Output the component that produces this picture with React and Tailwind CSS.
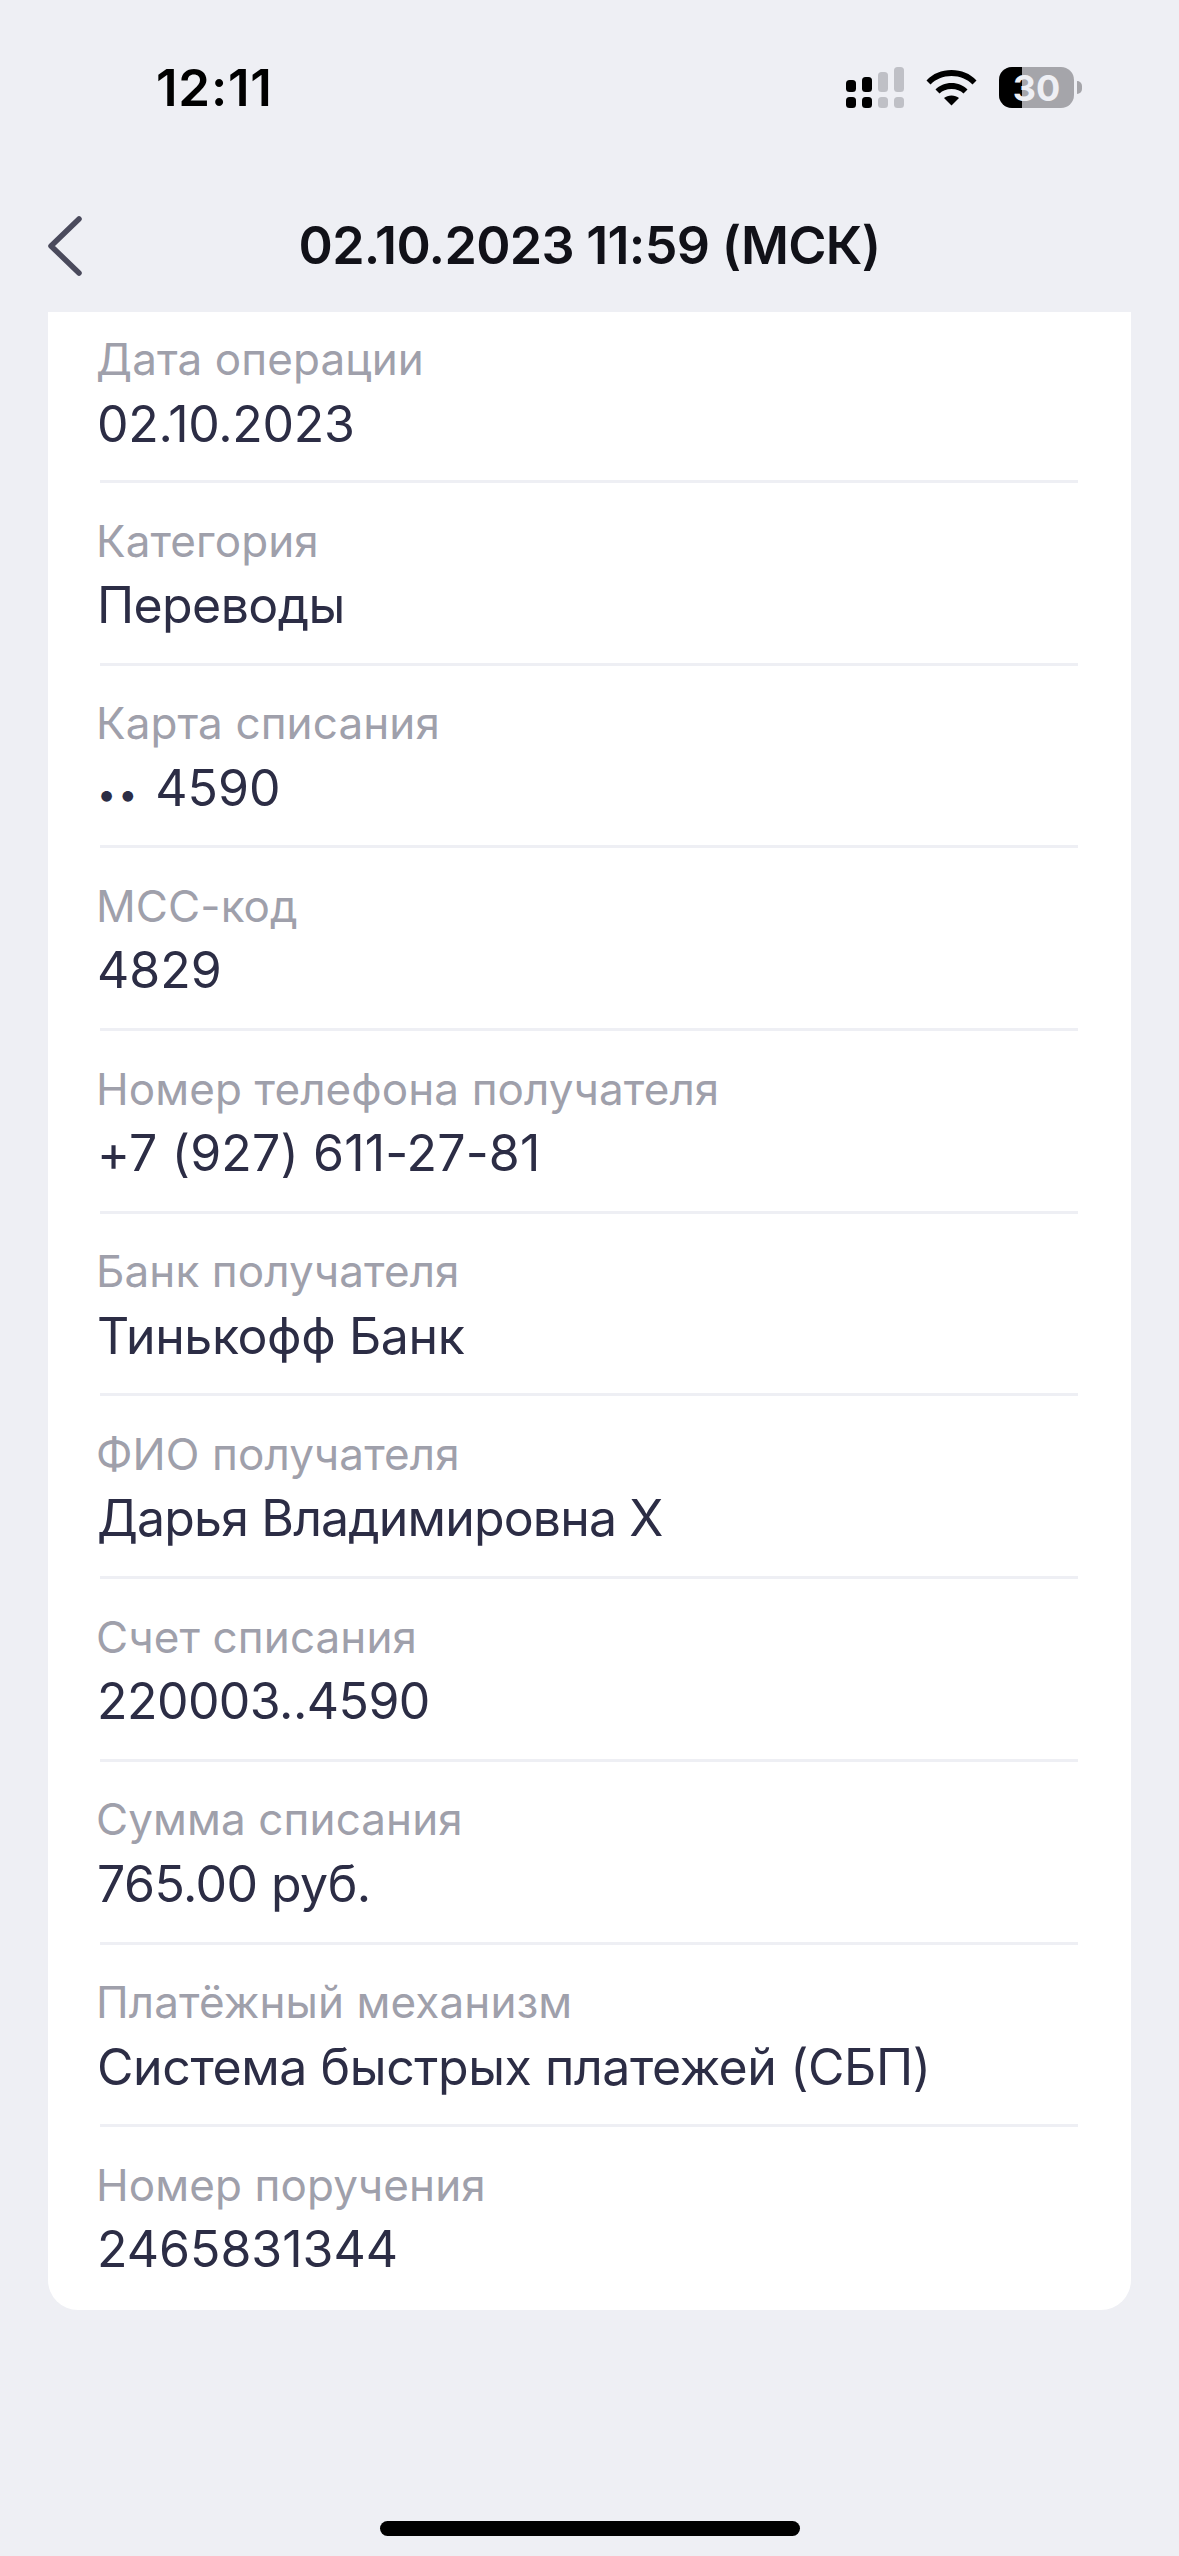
const rows = [
  ["Дата операции", "02.10.2023", "tracking-[-0.3px]"],
  ["Категория", "Переводы", "tracking-[-0.6px]"],
  ["Карта списания", "4590", "tracking-[0px]"],
  ["MCC-код", "4829", "tracking-[0px]"],
  ["Номер телефона получателя", "+7 (927) 611-27-81", "tracking-[0.15px]"],
  ["Банк получателя", "Тинькофф Банк", "tracking-[-0.4px]"],
  ["ФИО получателя", "Дарья Владимировна Х", "tracking-[-0.85px]"],
  ["Счет списания", "220003..4590", "tracking-[-0.55px]"],
  ["Сумма списания", "765.00 руб.", "tracking-[-0.55px]"],
  ["Платёжный механизм", "Система быстрых платежей (СБП)", "tracking-[-0.42px]"],
  ["Номер поручения", "2465831344", "tracking-[0px]"],
];

function Signal() {
  return (
    <svg width="58" height="41" viewBox="0 0 58 41">
      <rect x="0" y="13" width="10" height="12" rx="3.5" fill="#000" />
      <rect x="16" y="10" width="10" height="15" rx="3.5" fill="#000" />
      <rect x="32" y="5" width="10" height="20" rx="3.5" fill="#bfc0c6" />
      <rect x="48" y="0" width="10" height="25" rx="3.5" fill="#bfc0c6" />
      <rect x="0" y="30" width="10" height="11" rx="3.5" fill="#000" />
      <rect x="16" y="30" width="10" height="11" rx="3.5" fill="#000" />
      <rect x="32" y="30" width="10" height="11" rx="3.5" fill="#bfc0c6" />
      <rect x="48" y="30" width="10" height="11" rx="3.5" fill="#bfc0c6" />
    </svg>
  );
}

function Wifi() {
  return (
    <svg width="51" height="37" viewBox="0 0 51 37">
      <path d="M0.5 11.5C7 4.5 15.5 1 25.5 1C35.5 1 44 4.5 50.5 11.5L46.5 15.5C41 10 34 7 25.5 7C17 7 10 10 4.5 15.5Z" fill="#000" />
      <path d="M9.5 20.5C13.5 16.5 19 14 25.5 14C32 14 37.5 16.5 41.5 20.5L37.5 24.5C34.5 21.5 30.5 20 25.5 20C20.5 20 16.5 21.5 13.5 24.5Z" fill="#000" />
      <path d="M18 29C20 27.5 22.5 26.5 25.5 26.5C28.5 26.5 31 27.5 33 29L25.5 36.5Z" fill="#000" />
    </svg>
  );
}

export default function App() {
  return (
    <div className="flex h-[2556px] w-[1179px] flex-col overflow-hidden bg-[#eeeff4] font-['Inter','Noto_Sans',sans-serif]">
      <div className="flex h-[196px] shrink-0 items-start justify-between pl-[156px] pr-[97px] pt-[67px]">
        <span className="text-[51px] font-semibold leading-[41px] tracking-[0.8px] text-black">12:11</span>
        <div className="flex items-center">
          <Signal />
          <div className="ml-[22px]"><Wifi /></div>
          <div className="relative ml-[22px] flex h-[41px] w-[75px] items-center justify-center overflow-hidden rounded-[13px] bg-[#a5a5aa]">
            <div className="absolute inset-y-0 left-0 w-[23px] bg-black" />
            <span className="relative text-[36px] font-bold leading-none text-[#eeeff4]">30</span>
          </div>
          <div className="ml-[3px] h-[13px] w-[5px] rounded-r-full bg-[#a5a5aa]" />
        </div>
      </div>
      <div className="flex h-[116px] shrink-0 items-center px-[48px] pb-[16px]">
        <svg width="34" height="60" viewBox="0 0 34 60" className="shrink-0">
          <path d="M31 3L3 30L31 57" fill="none" stroke="#4a4a5c" strokeWidth="5.5" strokeLinecap="round" strokeLinejoin="round" />
        </svg>
        <div className="ml-[-34px] flex-1 text-center text-[52px] font-semibold leading-none tracking-[-0.7px] text-[#111118]">
          02.10.2023 11:59 (МСК)
        </div>
      </div>
      <div className="mx-[48px] rounded-b-[30px] bg-white pb-[29px] pl-[52px] pr-[53px]">
        {rows.map(([label, value, tracking], i) => (
          <div
            key={label}
            className={
              i === 0
                ? "h-[171px] border-b-[3px] border-[#eeeff4] pt-[19px]"
                : i === rows.length - 1
                  ? "pt-[29.5px]"
                  : "h-[182.7px] border-b-[3px] border-[#eeeff4] pt-[29.5px]"
            }
          >
            <div className="ml-[-4px] text-[44px] leading-[56px] tracking-[0.1px] text-[#9fa0ab]">{label}</div>
            <div className={`ml-[-3px] mt-[4.5px] text-[50px] leading-[64px] text-[#2c2d45] ${tracking}`}>
              {i === 2 && <span className="mr-[16px] text-[34px] tracking-[2px]">••</span>}
              {value}
            </div>
          </div>
        ))}
      </div>
      <div className="mx-auto mt-[210.5px] h-[15px] w-[420px] rounded-full bg-black" />
    </div>
  );
}
